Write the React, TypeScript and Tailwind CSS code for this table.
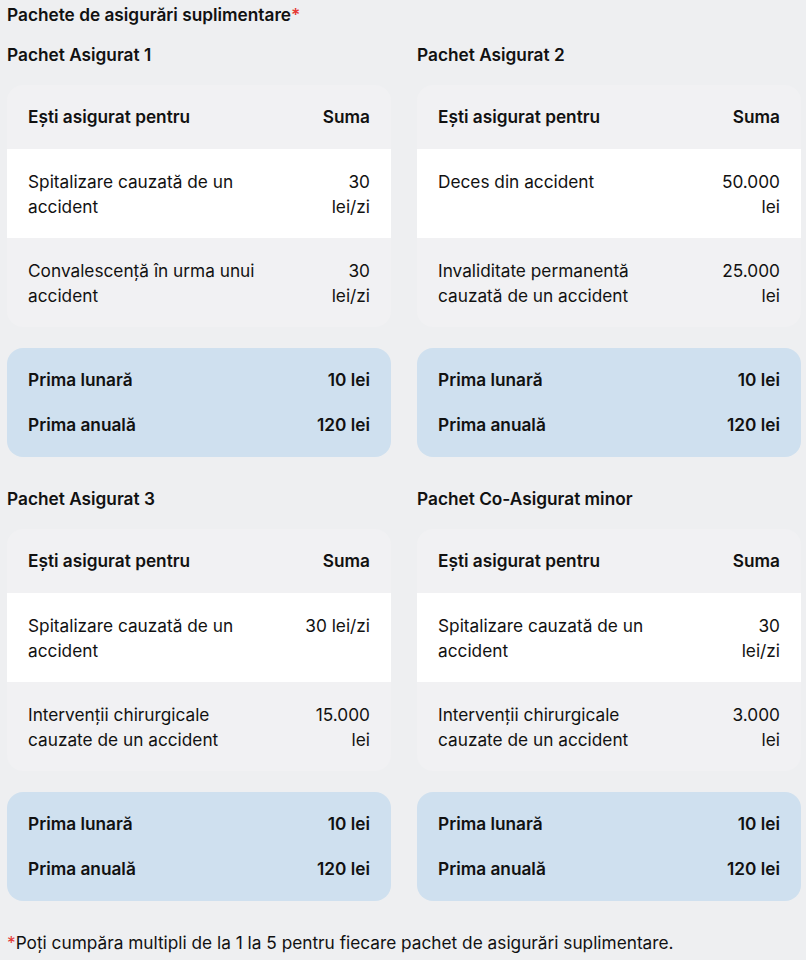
import React from 'react';

interface Row {
  label: string;
  value: string;
}

interface Pack {
  title: string;
  rows: Row[];
  monthly: string;
  yearly: string;
}

const PACKS: Pack[] = [
  {
    title: 'Pachet Asigurat 1',
    rows: [
      { label: 'Spitalizare cauzată de un accident', value: '30 lei/zi' },
      { label: 'Convalescență în urma unui accident', value: '30 lei/zi' },
    ],
    monthly: '10 lei',
    yearly: '120 lei',
  },
  {
    title: 'Pachet Asigurat 2',
    rows: [
      { label: 'Deces din accident', value: '50.000 lei' },
      { label: 'Invaliditate permanentă cauzată de un accident', value: '25.000 lei' },
    ],
    monthly: '10 lei',
    yearly: '120 lei',
  },
  {
    title: 'Pachet Asigurat 3',
    rows: [
      { label: 'Spitalizare cauzată de un accident', value: '30 lei/zi' },
      { label: 'Intervenții chirurgicale cauzate de un accident', value: '15.000 lei' },
    ],
    monthly: '10 lei',
    yearly: '120 lei',
  },
  {
    title: 'Pachet Co-Asigurat minor',
    rows: [
      { label: 'Spitalizare cauzată de un accident', value: '30 lei/zi' },
      { label: 'Intervenții chirurgicale cauzate de un accident', value: '3.000 lei' },
    ],
    monthly: '10 lei',
    yearly: '120 lei',
  },
];

function PackCard({ pack }: { pack: Pack }) {
  return (
    <div>
      <h3 className="font-semibold leading-6">{pack.title}</h3>
      <div className="mt-[18px] rounded-2xl bg-[#f1f1f3] overflow-hidden">
        <table className="w-full table-auto border-collapse">
          <thead>
            <tr>
              <th className="text-left font-semibold px-[21px] py-5 leading-6">Ești asigurat pentru</th>
              <th className="text-right font-semibold px-[21px] py-5 leading-6">Suma</th>
            </tr>
          </thead>
          <tbody>
            {pack.rows.map((r, i) => (
              <tr key={i} className={i % 2 === 0 ? 'bg-white' : ''}>
                <td className="align-top px-[21px] py-[19.5px] leading-[25px]">{r.label}</td>
                <td className="align-top text-right px-[21px] py-[19.5px] leading-[25px]">{r.value}</td>
              </tr>
            ))}
          </tbody>
        </table>
      </div>
      <div className="mt-[21px] rounded-2xl bg-[#cfe0ef] px-[21px] py-5 flex flex-col gap-[21px] font-semibold leading-6">
        <div className="flex justify-between">
          <span>Prima lunară</span>
          <span>{pack.monthly}</span>
        </div>
        <div className="flex justify-between">
          <span>Prima anuală</span>
          <span>{pack.yearly}</span>
        </div>
      </div>
    </div>
  );
}

export default function App() {
  return (
    <div
      className="min-h-[960px] bg-[#eeeff1] text-[#111111] text-[17.25px] pl-[7px] pr-[5px] pt-[3px]"
      style={{ fontFamily: 'Inter, "Noto Sans", sans-serif' }}
    >
      <h2 className="font-semibold leading-6">
        Pachete de asigurări suplimentare<span className="text-[#e53935]">*</span>
      </h2>
      <div className="mt-4 grid grid-cols-2 gap-x-[26px] gap-y-[30px]">
        {PACKS.map((p) => (
          <PackCard key={p.title} pack={p} />
        ))}
      </div>
      <p className="mt-[30px] leading-6">
        <span className="text-[#e53935]">*</span>Poți cumpăra multipli de la 1 la 5 pentru fiecare pachet de asigurări suplimentare.
      </p>
    </div>
  );
}
